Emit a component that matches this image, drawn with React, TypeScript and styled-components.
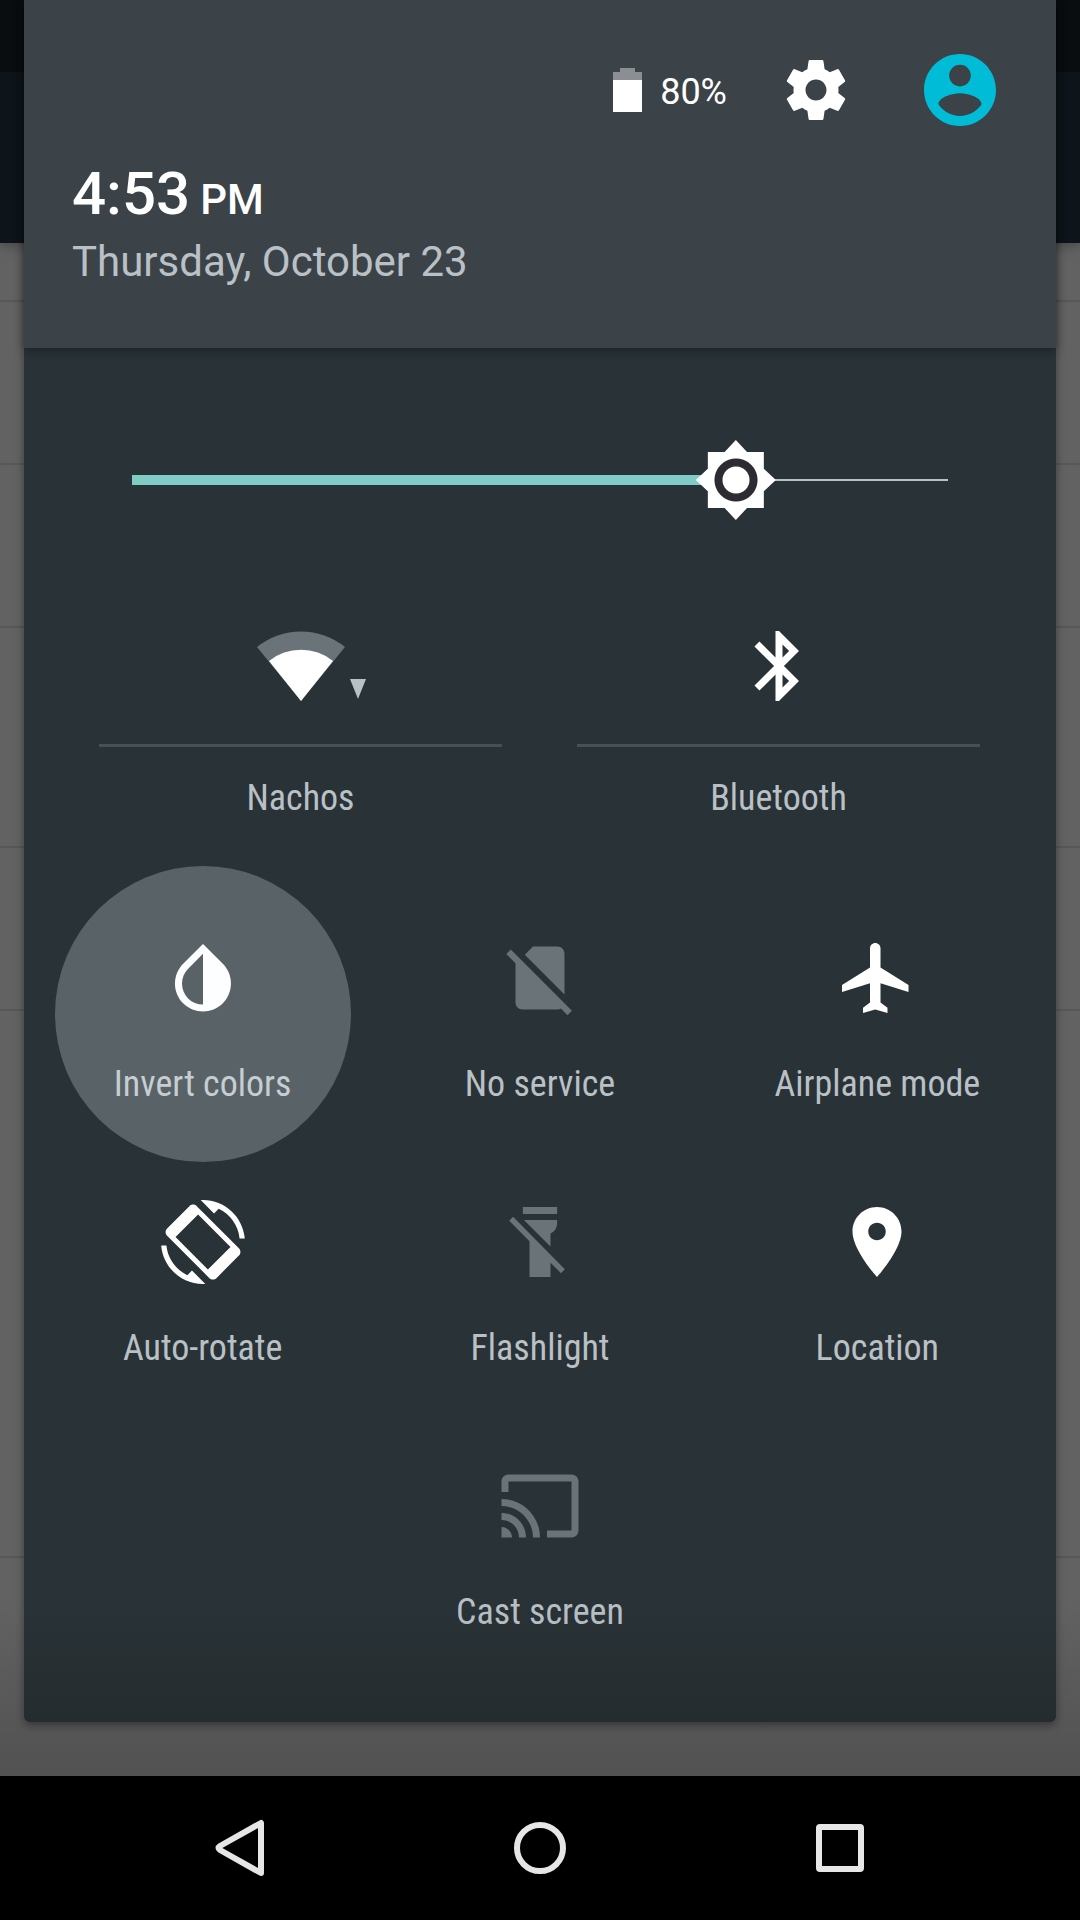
import React, { useState } from "react";
import styled, { createGlobalStyle } from "styled-components";

const color = {
  header: "#3b4248",
  panel: "#293236",
  text: "#ffffff",
  muted: "#b9c0c6",
  disabled: "#6a7377",
  accent: "#80cbc4",
  avatar: "#00bcd6",
  nav: "#e6e6e6",
};

const GlobalStyle = createGlobalStyle`
  *, *::before, *::after { box-sizing: border-box; }
  body {
    margin: 0;
    background: #000;
    font-family: Roboto, "Liberation Sans", sans-serif;
  }
  button {
    margin: 0;
    padding: 0;
    border: 0;
    background: none;
    color: inherit;
    font: inherit;
    cursor: pointer;
  }
  svg { display: block; }
`;

const Screen = styled.div`
  display: flex;
  flex-direction: column;
  min-height: 100vh;
`;

const Stage = styled.main`
  position: relative;
  flex: 1;
  padding: 0 24px 54px;
  overflow: hidden;
  &::after {
    content: "";
    position: absolute;
    inset: auto 0 0;
    height: 180px;
    background: linear-gradient(rgba(0, 0, 0, 0), rgba(0, 0, 0, 0.17));
    pointer-events: none;
  }
`;

const Backdrop = styled.div`
  position: absolute;
  inset: 0;
  background: #626262;
`;

const AppBar = styled.div`
  height: 243px;
  background: linear-gradient(#0a0d10 72px, #0e151a 72px);
  box-shadow: 0 2px 12px rgba(0, 0, 0, 0.3);
`;

const BackdropRow = styled.div<{ $height: number }>`
  height: ${(p) => p.$height}px;
  border-bottom: 2px solid #575757;
`;

const Panel = styled.section`
  position: relative;
  background: ${color.panel};
  border-radius: 0 0 6px 6px;
  box-shadow: 0 3px 8px rgba(0, 0, 0, 0.4);
`;

const Header = styled.header`
  position: relative;
  padding: 54px 60px 61px 48px;
  background: ${color.header};
  box-shadow: 0 2px 10px rgba(0, 0, 0, 0.35);
`;

const StatusRow = styled.div`
  display: flex;
  align-items: center;
  justify-content: flex-end;
`;

const Battery = styled.div`
  display: flex;
  align-items: flex-end;
  gap: 18px;
  margin-right: 53px;
  color: ${color.text};
  font-size: 36px;
  line-height: 40px;
`;

const IconButton = styled.button`
  width: 72px;
  height: 72px;
  & + & {
    margin-left: 72px;
  }
`;

const Clock = styled.div`
  display: flex;
  align-items: baseline;
  gap: 10px;
  margin-top: 33px;
  color: ${color.text};
  font-size: 60px;
  font-weight: 500;
  line-height: 70px;
`;

const Meridiem = styled.span`
  font-size: 42px;
  line-height: 42px;
`;

const DateLine = styled.div`
  margin-top: 8px;
  color: ${color.muted};
  font-size: 42px;
  line-height: 50px;
`;

const Body = styled.div`
  padding: 92px 0 48px;
`;

const SliderRow = styled.label`
  display: block;
  padding: 0 68px;
`;

const Slider = styled.input`
  display: block;
  width: 100%;
  height: 80px;
  margin: 0;
  appearance: none;
  background: none;
  &::-webkit-slider-runnable-track {
    height: 80px;
    background:
      linear-gradient(${color.accent}, ${color.accent}) 40px 50% /
        calc((100% - 80px) * var(--level)) 10px no-repeat,
      linear-gradient(${color.muted}, ${color.muted}) 50% 50% /
        calc(100% - 80px) 2px no-repeat;
  }
  &::-webkit-slider-thumb {
    appearance: none;
    width: 80px;
    height: 80px;
    background: radial-gradient(
      circle,
      #fff 13px,
      #2d2d31 14px,
      #2d2d31 21px,
      #fff 22px
    );
    clip-path: polygon(
      50% 0, 64% 15%, 85% 15%, 85% 36%,
      100% 50%, 85% 64%, 85% 85%, 64% 85%,
      50% 100%, 36% 85%, 15% 85%, 15% 64%,
      0 50%, 15% 36%, 15% 15%, 36% 15%
    );
  }
`;

const DualTiles = styled.div`
  display: grid;
  grid-template-columns: 1fr 1fr;
  gap: 75px;
  margin: 104px 76px 63px 75px;
`;

const DualTile = styled.div`
  display: flex;
  flex-direction: column;
`;

const DualToggle = styled.button`
  display: flex;
  justify-content: center;
  padding-bottom: 36px;
  border-bottom: 3px solid #485055;
`;

const Label = styled.span`
  color: ${color.muted};
  font-family: "Roboto Condensed", Roboto, sans-serif;
  font-size: 36px;
  line-height: 42px;
  text-align: center;
  white-space: nowrap;
`;

const DualLabel = styled.button`
  display: flex;
  justify-content: center;
  padding-top: 30px;
`;

const Tiles = styled.div`
  display: flex;
  flex-wrap: wrap;
  justify-content: center;
  padding: 0 10px;
`;

const Tile = styled.button<{ $pressed?: boolean }>`
  position: relative;
  display: flex;
  flex: 0 0 calc(100% / 3);
  flex-direction: column;
  align-items: center;
  gap: 43px;
  height: 264px;
  padding-top: 54px;
  &::before {
    content: "";
    display: ${(p) => (p.$pressed ? "block" : "none")};
    position: absolute;
    top: 50%;
    left: 50%;
    width: 296px;
    height: 296px;
    border-radius: 50%;
    background: rgba(244, 252, 255, 0.24);
    transform: translate(-50%, -50%);
  }
`;

const Glyph = styled.svg<{ $off?: boolean }>`
  width: 84px;
  height: 84px;
  fill: ${(p) => (p.$off ? color.disabled : color.text)};
`;

const NavBar = styled.nav`
  display: grid;
  grid-template-columns: repeat(3, 1fr);
  height: 144px;
  padding: 0 90px;
  background: #000;
`;

const NavButton = styled.button`
  display: grid;
  place-items: center;
`;

const NavIcon = styled.svg`
  width: 72px;
  height: 72px;
  fill: none;
  stroke: ${color.nav};
  stroke-width: 6px;
  stroke-linejoin: round;
`;

const paths = {
  settings:
    "M19.43 12.98c.04-.32.07-.64.07-.98s-.03-.66-.07-.98l2.11-1.65c.19-.15.24-.42.12-.64l-2-3.46c-.12-.22-.39-.3-.61-.22l-2.49 1c-.52-.4-1.08-.73-1.69-.98l-.38-2.65C14.46 2.18 14.25 2 14 2h-4c-.25 0-.46.18-.49.42l-.38 2.65c-.61.25-1.17.59-1.69.98l-2.49-1c-.23-.09-.49 0-.61.22l-2 3.46c-.13.22-.07.49.12.64l2.11 1.65c-.04.32-.07.65-.07.98s.03.66.07.98l-2.11 1.65c-.19.15-.24.42-.12.64l2 3.46c.12.22.39.3.61.22l2.49-1c.52.4 1.08.73 1.69.98l.38 2.65c.03.24.24.42.49.42h4c.25 0 .46-.18.49-.42l.38-2.65c.61-.25 1.17-.59 1.69-.98l2.49 1c.23.09.49 0 .61-.22l2-3.46c.12-.22.07-.49-.12-.64l-2.11-1.65zM12 15.5c-1.93 0-3.5-1.57-3.5-3.5s1.57-3.5 3.5-3.5 3.5 1.57 3.5 3.5-1.57 3.5-3.5 3.5z",
  account:
    "M12 2C6.48 2 2 6.48 2 12s4.48 10 10 10 10-4.48 10-10S17.52 2 12 2zm0 3c1.66 0 3 1.34 3 3s-1.34 3-3 3-3-1.34-3-3 1.34-3 3-3zm0 14.2c-2.5 0-4.71-1.28-6-3.22.03-1.99 4-3.08 6-3.08 1.99 0 5.97 1.09 6 3.08-1.29 1.94-3.5 3.22-6 3.22z",
  bluetooth:
    "M17.71 7.71L12 2h-1v7.59L6.41 5 5 6.41 10.59 12 5 17.59 6.41 19 11 14.41V22h1l5.71-5.71-4.3-4.29 4.3-4.29zM13 5.83l1.88 1.88L13 9.59V5.83zm1.88 10.46L13 18.17v-3.76l1.88 1.88z",
  invert:
    "M17.66 7.93L12 2.27 6.34 7.93c-3.12 3.12-3.12 8.19 0 11.31C7.9 20.8 9.95 21.58 12 21.58c2.05 0 4.1-.78 5.66-2.34 3.12-3.12 3.12-8.19 0-11.31zM12 19.59c-1.6 0-3.11-.62-4.24-1.76C6.62 16.69 6 15.19 6 13.59s.62-3.11 1.76-4.24L12 5.1v14.49z",
  noSim:
    "M18.99 5c0-1.1-.89-2-1.99-2h-7L7.66 5.34 19 16.68 18.99 5zM3.65 3.88L2.38 5.15 5 7.77V19c0 1.1.9 2 2 2h10.01c.35 0 .67-.1.96-.26l1.88 1.88 1.27-1.27L3.65 3.88z",
  airplane:
    "M21 16v-2l-8-5V3.5c0-.83-.67-1.5-1.5-1.5S10 2.67 10 3.5V9l-8 5v2l8-2.5V19l-2 1.5V22l3.5-1 3.5 1v-1.5L13 19v-5.5l8 2.5z",
  rotate:
    "M16.48 2.52c3.27 1.55 5.61 4.72 5.97 8.48h1.5C23.44 4.84 18.29 0 12 0l-.66.03 3.81 3.81 1.33-1.32zM10.23 1.75c-.59-.59-1.54-.59-2.12 0L1.75 8.11c-.59.59-.59 1.54 0 2.12l12.02 12.02c.59.59 1.54.59 2.12 0l6.36-6.36c.59-.59.59-1.54 0-2.12L10.23 1.75zM13.4 19.85L4.15 10.6l6.45-6.45 9.25 9.25-6.45 6.45zM7.52 21.48C4.25 19.94 1.91 16.76 1.55 13H.05C.56 19.16 5.71 24 12 24l.66-.03-3.81-3.81-1.33 1.32z",
  flashlight:
    "M7.1 2H16.9V4H7.1zM7.4 5.7H16.9V6.4C16.9 8.2 16 9 15 9.6V13.3zM4.3 4.8L3.2 5.9 9 11.8V22H15V17.9L18 20.9 19.1 19.8z",
  place:
    "M12 2C8.13 2 5 5.13 5 9c0 5.25 7 13 7 13s7-7.75 7-13c0-3.87-3.13-7-7-7zm0 9.5c-1.38 0-2.5-1.12-2.5-2.5s1.12-2.5 2.5-2.5 2.5 1.12 2.5 2.5-1.12 2.5-2.5 2.5z",
  cast: "M21 3H3c-1.1 0-2 .9-2 2v3h2V5h18v14h-7v2h7c1.1 0 2-.9 2-2V5c0-1.1-.9-2-2-2zM1 18v3h3c0-1.66-1.34-3-3-3zm0-4v2c2.76 0 5 2.24 5 5h2c0-3.87-3.13-7-7-7zm0-4v2c4.97 0 9 4.03 9 9h2c0-6.08-4.93-11-11-11z",
};

const tiles = [
  { label: "Invert colors", path: paths.invert, pressed: true },
  { label: "No service", path: paths.noSim, off: true },
  { label: "Airplane mode", path: paths.airplane },
  { label: "Auto-rotate", path: paths.rotate },
  { label: "Flashlight", path: paths.flashlight, off: true },
  { label: "Location", path: paths.place },
  { label: "Cast screen", path: paths.cast, off: true },
];

const backdropRows = [59, 163, 163, 220, 163, 547];

const BatteryIcon = () => (
  <svg width="29" height="44" viewBox="0 0 29 44">
    <path fill="#8b8f93" d="M7 0h15v4h7v9H0V4h7z" />
    <path fill="#fff" d="M0 12h29v32H0z" />
  </svg>
);

const WifiIcon = () => (
  <svg width="132" height="84" viewBox="0 0 132 84">
    <path fill={color.disabled} d="M66 77L22 23A70 70 0 0 1 110 23z" />
    <path fill="#fff" d="M66 77L34 37A51 51 0 0 1 98 37z" />
    <path fill={color.muted} d="M115 55h16l-8 20z" />
  </svg>
);

export default function App() {
  const [brightness, setBrightness] = useState(74);

  return (
    <Screen>
      <GlobalStyle />
      <Stage>
        <Backdrop aria-hidden="true">
          <AppBar />
          {backdropRows.map((height, i) => (
            <BackdropRow key={i} $height={height} />
          ))}
        </Backdrop>
        <Panel>
          <Header>
            <StatusRow>
              <Battery>
                <BatteryIcon />
                <span>80%</span>
              </Battery>
              <IconButton aria-label="Settings">
                <svg width="72" height="72" viewBox="0 0 24 24" fill="#fff">
                  <path d={paths.settings} />
                </svg>
              </IconButton>
              <IconButton aria-label="User profile">
                <svg width="72" height="72" viewBox="2 2 20 20" fill={color.avatar}>
                  <path d={paths.account} />
                </svg>
              </IconButton>
            </StatusRow>
            <Clock>
              4:53<Meridiem>PM</Meridiem>
            </Clock>
            <DateLine>Thursday, October 23</DateLine>
          </Header>
          <Body>
            <SliderRow>
              <Slider
                type="range"
                aria-label="Brightness"
                min={0}
                max={100}
                value={brightness}
                onChange={(e) => setBrightness(Number(e.target.value))}
                style={{ "--level": brightness / 100 } as React.CSSProperties}
              />
            </SliderRow>
            <DualTiles>
              <DualTile>
                <DualToggle aria-label="Wi-Fi">
                  <WifiIcon />
                </DualToggle>
                <DualLabel>
                  <Label>Nachos</Label>
                </DualLabel>
              </DualTile>
              <DualTile>
                <DualToggle aria-label="Toggle Bluetooth">
                  <Glyph viewBox="0 0 24 24">
                    <path d={paths.bluetooth} />
                  </Glyph>
                </DualToggle>
                <DualLabel>
                  <Label>Bluetooth</Label>
                </DualLabel>
              </DualTile>
            </DualTiles>
            <Tiles>
              {tiles.map((tile) => (
                <Tile key={tile.label} $pressed={tile.pressed}>
                  <Glyph viewBox="0 0 24 24" $off={tile.off}>
                    <path fillRule="evenodd" d={tile.path} />
                  </Glyph>
                  <Label>{tile.label}</Label>
                </Tile>
              ))}
            </Tiles>
          </Body>
        </Panel>
      </Stage>
      <NavBar>
        <NavButton aria-label="Back">
          <NavIcon viewBox="0 0 72 72">
            <path d="M57 11V61L16 38Q13 36 16 34z" />
          </NavIcon>
        </NavButton>
        <NavButton aria-label="Home">
          <NavIcon viewBox="0 0 72 72">
            <circle cx="36" cy="36" r="23" />
          </NavIcon>
        </NavButton>
        <NavButton aria-label="Recent apps">
          <NavIcon viewBox="0 0 72 72">
            <rect x="15" y="15" width="42" height="42" rx="1" />
          </NavIcon>
        </NavButton>
      </NavBar>
    </Screen>
  );
}
